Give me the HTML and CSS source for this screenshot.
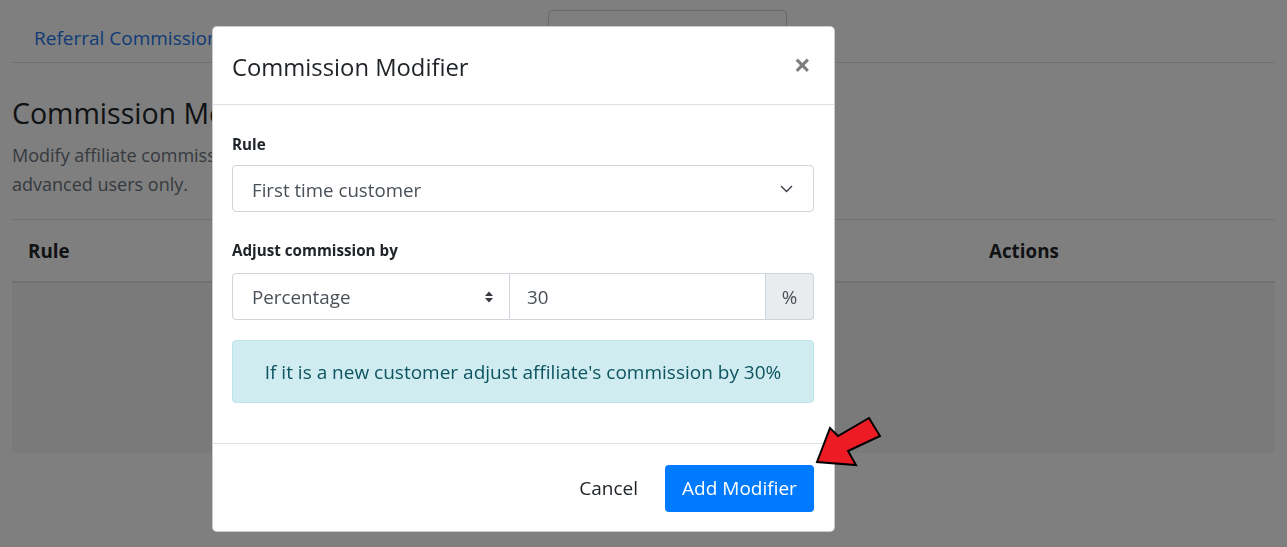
FILE: index.html
```html
<!DOCTYPE html>
<html lang="en">
<head>
<meta charset="utf-8">
<title>Commission Modifiers</title>
<link rel="stylesheet" href="styles.css">
</head>
<body>
<div class="page">
  <nav class="tabs">
    <a class="tab tab-first" href="#">Referral Commission</a>
    <a class="tab tab-middle" href="#">Recurring Commission</a>
    <a class="tab tab-active" href="#">Commission Modifiers</a>
  </nav>
  <h2 class="heading">Commission Modifiers</h2>
  <p class="lead">Modify affiliate commission based on different rules. This feature is intended for<br>advanced users only.</p>
  <div class="table">
    <div class="thead">
      <div class="th th-rule">Rule</div>
      <div class="th th-actions">Actions</div>
    </div>
    <div class="tbody"></div>
  </div>
</div>

<div class="backdrop"></div>

<div class="modal">
  <div class="modal-header">
    <h5 class="modal-title">Commission Modifier</h5>
    <span class="close">&times;</span>
  </div>
  <div class="modal-body">
    <label class="label label-first">Rule</label>
    <div class="control">
      <span>First time customer</span>
      <svg class="chevron" width="13" height="8" viewBox="0 0 13 8"><path d="M1 1 L6.5 6.5 L12 1" fill="none" stroke="#343a40" stroke-width="1.3"/></svg>
    </div>
    <label class="label label-second">Adjust commission by</label>
    <div class="input-group">
      <div class="ig-select">
        <span>Percentage</span>
        <svg class="updown" width="8" height="12" viewBox="0 0 8 12"><polygon points="0,5 4,0.5 8,5" fill="#343a40"/><polygon points="0,7 4,11.5 8,7" fill="#343a40"/></svg>
      </div>
      <div class="ig-input">30</div>
      <div class="ig-append">%</div>
    </div>
    <div class="alert">If it is a new customer adjust affiliate's commission by 30%</div>
  </div>
  <div class="modal-footer">
    <button class="btn btn-cancel">Cancel</button>
    <button class="btn btn-primary">Add Modifier</button>
  </div>
</div>

<svg class="arrow" width="95" height="70" viewBox="0 0 95 70">
  <polygon points="17,57 30,23 38,31 69,13 80,31 48,46 56,60" fill="#ed1c24" stroke="#000" stroke-width="2" stroke-linejoin="miter"/>
</svg>
</body>
</html>
```

FILE: styles.css
```css
* { box-sizing: border-box; }

html, body {
  margin: 0;
  padding: 0;
  background: #fff;
  font-family: "Open Sans", "Noto Sans", sans-serif;
  color: #212529;
  overflow: hidden;
}

.page {
  padding: 10px 12px 0 12px;
  height: 547px;
}

.tabs {
  display: flex;
  border-bottom: 1px solid #dee2e6;
  height: 53px;
}

.tab {
  display: block;
  height: 52px;
  line-height: 56px;
  padding: 0 22px;
  font-size: 19px;
  color: #2277ee;
  text-decoration: none;
  white-space: nowrap;
  overflow: hidden;
}

.tab-first { width: 240px; }
.tab-middle { width: 296px; }

.tab-active {
  width: 239px;
  border: 1px solid #ced4da;
  border-bottom: none;
  border-radius: 5px 5px 0 0;
  color: #495057;
}

.heading {
  margin: 33px 0 0 0;
  font-size: 28.5px;
  font-weight: 400;
  line-height: 34px;
}

.lead {
  margin: 11px 0 0 0;
  font-size: 18px;
  line-height: 29px;
  color: #6c757d;
}

.table {
  margin-top: 20px;
  border-top: 1px solid #dee2e6;
}

.thead {
  display: flex;
  height: 63px;
  border-bottom: 2px solid #dee2e6;
  align-items: center;
}

.th {
  font-weight: 700;
  font-size: 18.8px;
}

.th-rule {
  padding-left: 16px;
  width: 977px;
}

.tbody {
  height: 170px;
  background: #f4f4f4;
}

.backdrop {
  position: fixed;
  inset: 0;
  background: rgba(0, 0, 0, 0.5);
}

.modal {
  position: absolute;
  left: 212px;
  top: 26px;
  width: 623px;
  height: 506px;
  background: #fff;
  border: 1px solid rgba(0, 0, 0, 0.2);
  border-radius: 5px;
  display: flex;
  flex-direction: column;
}

.modal-header {
  height: 78px;
  border-bottom: 1px solid #dee2e6;
  display: flex;
  align-items: center;
  justify-content: space-between;
  padding: 2px 23px 0 19px;
}

.modal-title {
  margin: 0;
  font-size: 23.8px;
  font-weight: 400;
  line-height: 30px;
  color: #212529;
}

.close {
  font-size: 30px;
  font-weight: 700;
  line-height: 1;
  color: #000;
  opacity: 0.5;
  margin-top: -4px;
}

.modal-body {
  padding: 7px 20px 0 19px;
  height: 339px;
  border-bottom: 1px solid #dee2e6;
}

.label {
  display: block;
  font-size: 15.2px;
  font-weight: 700;
  line-height: 24px;
}

.label-first { margin-top: 20px; margin-bottom: 9px; }
.label-second { margin-top: 26px; margin-bottom: 11px; }

.control {
  height: 47px;
  border: 1px solid #ced4da;
  border-radius: 4px;
  display: flex;
  align-items: center;
  justify-content: space-between;
  padding: 0 20px 0 19px;
  font-size: 18.7px;
  color: #495057;
}

.control span { margin-top: 1px; }
.chevron { margin-top: 1px; }

.input-group {
  display: flex;
  height: 47px;
  font-size: 18.8px;
  color: #495057;
}

.ig-select {
  width: 278px;
  border: 1px solid #ced4da;
  border-radius: 4px 0 0 4px;
  display: flex;
  align-items: center;
  justify-content: space-between;
  padding: 0 16px 0 19px;
}

.updown { margin-top: 1px; }

.ig-input {
  flex: 1;
  border: 1px solid #ced4da;
  border-left: none;
  display: flex;
  align-items: center;
  padding-left: 17px;
}

.ig-append {
  width: 48px;
  background: #e9ecef;
  border: 1px solid #ced4da;
  border-left: none;
  border-radius: 0 4px 4px 0;
  display: flex;
  align-items: center;
  justify-content: center;
}

.alert {
  margin-top: 20px;
  height: 63px;
  background: #d1ecf1;
  border: 1px solid #bee5eb;
  border-radius: 4px;
  color: #0c5460;
  font-size: 19px;
  display: flex;
  align-items: center;
  justify-content: center;
}

.modal-footer {
  flex: 1;
  display: flex;
  align-items: center;
  justify-content: flex-end;
  padding: 1px 20px 0 20px;
  gap: 9px;
}

.btn {
  font-family: inherit;
  font-size: 19px;
  height: 47px;
  border: none;
  border-radius: 4px;
  cursor: pointer;
}

.btn-cancel {
  background: transparent;
  color: #212529;
  padding: 0 18px;
}

.btn-primary {
  background: #007bff;
  color: #fff;
  padding: 0;
  width: 149px;
}

.arrow {
  position: absolute;
  left: 800px;
  top: 405px;
}
```
